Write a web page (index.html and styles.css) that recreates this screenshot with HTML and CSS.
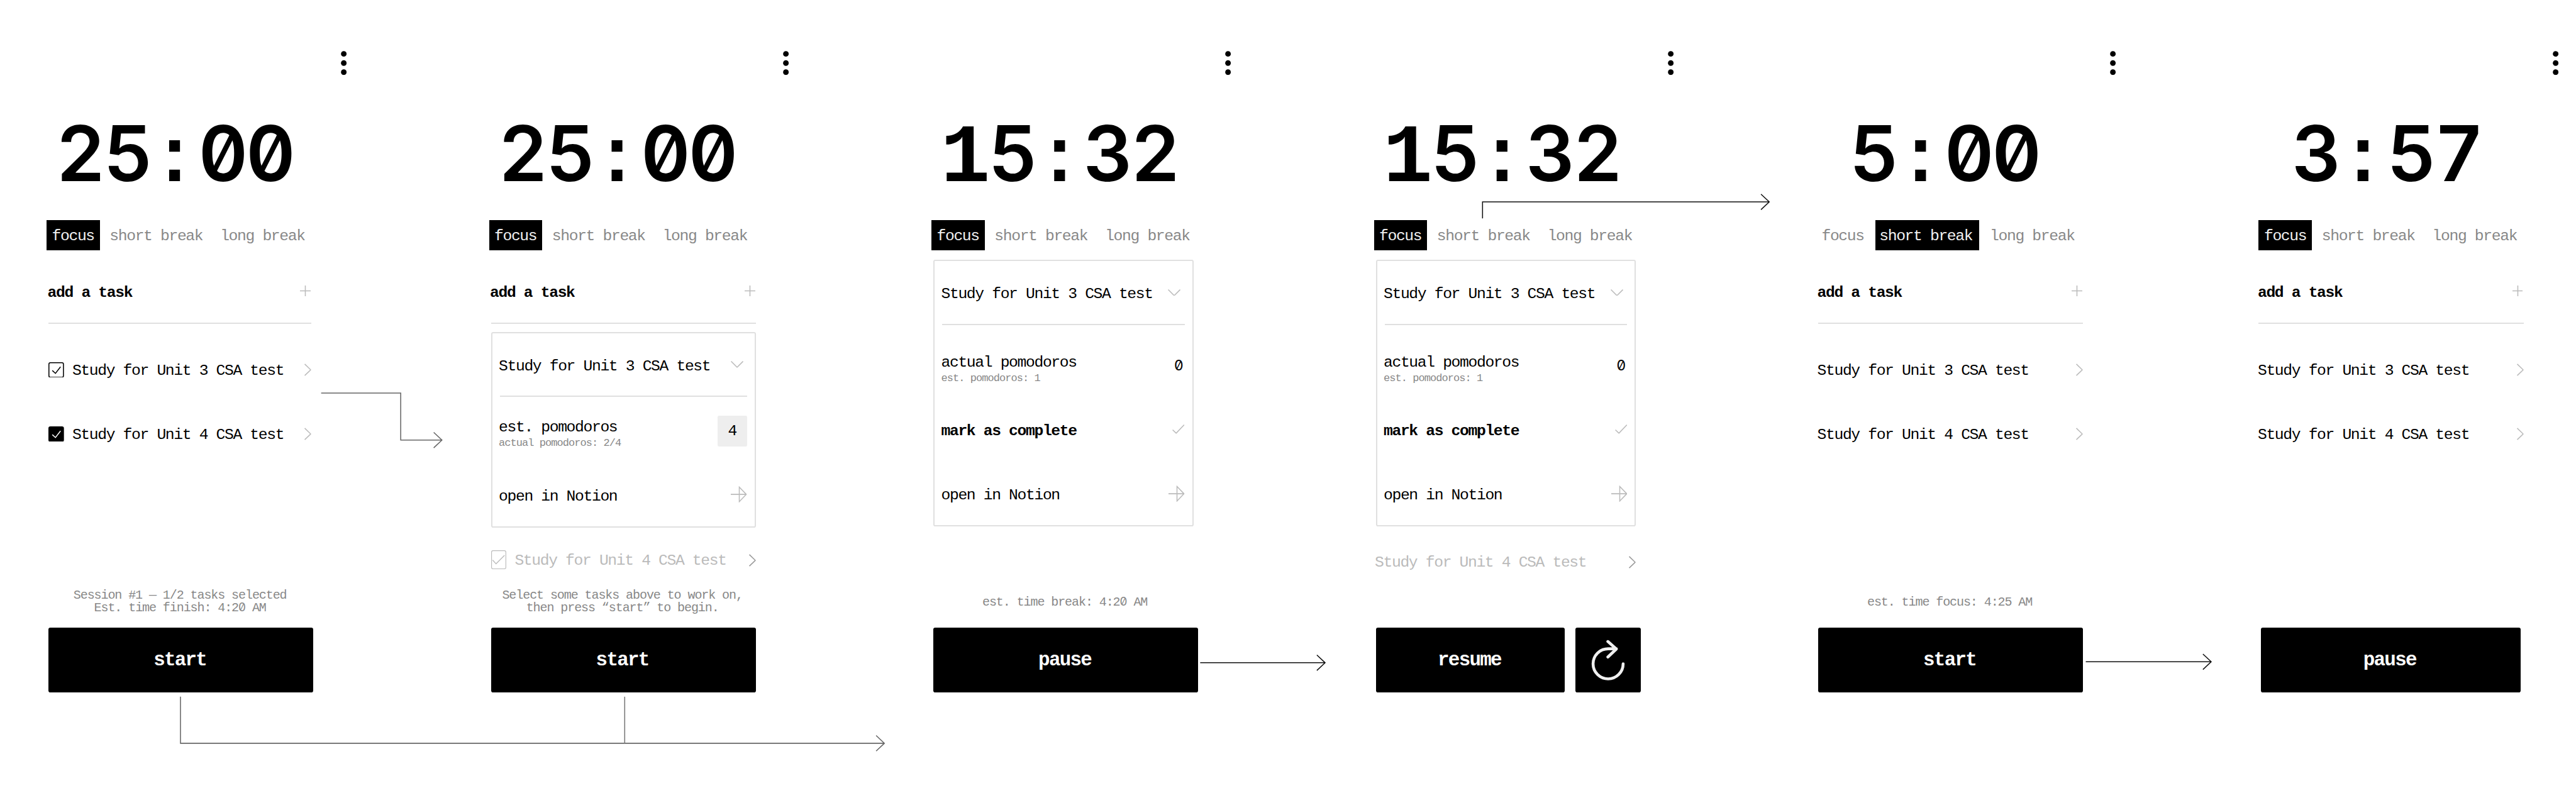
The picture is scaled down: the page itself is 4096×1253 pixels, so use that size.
FILE: index.html
```html
<!DOCTYPE html>
<html lang="en">
<head>
<meta charset="utf-8">
<title>Pomodoro timer flow</title>
<link rel="stylesheet" href="styles.css">
</head>
<body>
<svg class="defs" width="0" height="0" aria-hidden="true">
  <symbol id="dots" viewBox="0 0 12 50"><circle cx="6" cy="6" r="5.8"/><circle cx="6" cy="25" r="5.8"/><circle cx="6" cy="43.8" r="5.8"/></symbol>
  <symbol id="plus" viewBox="0 0 22 22"><path d="M11 0V22M0 11H22"/></symbol>
  <symbol id="right" viewBox="0 0 14 26"><path d="M.7 1.2L13 13L.7 24.8"/></symbol>
  <symbol id="down" viewBox="0 0 26 14"><path d="M.7 .7L13 13L25.300 .7"/></symbol>
  <symbol id="open" viewBox="0 0 33 34"><path d="M0 17H32M17.500 2V32L32 17Z"/></symbol>
  <symbol id="tick" viewBox="0 0 25 19"><path d="M.7 11L8 18L24.500 .7"/></symbol>
</svg>
<main class="board">

  <section class="screen">
    <div class="menu"><svg><use href="#dots"/></svg></div>
    <h1 class="time">25<span class="mono">:</span>00</h1>
    <nav class="tabs"><span class="tab focus on">focus</span><span class="tab short">short break</span><span class="tab long">long break</span></nav>
    <div class="body narrow">
      <div class="add"><b>add a task</b><svg class="plus"><use href="#plus"/></svg></div>
      <div class="tasks">
        <div class="task"><svg class="box" viewBox="0 0 32 32"><rect x="1" y="1" width="30" height="30" rx="3" fill="#fff" stroke="#000" stroke-width="2"/><path d="M8 17L14.500 23L25 9.500" stroke="#000" stroke-width="2"/></svg><span>Study for Unit 3 CSA test</span><svg class="right"><use href="#right"/></svg></div>
        <div class="task"><svg class="box" viewBox="0 0 32 32"><rect width="32" height="32" rx="4" fill="#000" stroke="none"/><path d="M8 17L14.500 23L25 9.500" stroke="#fff" stroke-width="2"/></svg><span>Study for Unit 4 CSA test</span><svg class="right"><use href="#right"/></svg></div>
      </div>
      <p class="note">Session #1 — 1/2 tasks selected<br>Est. time finish: 4:2<span class="zero">0</span> AM</p>
    </div>
    <div class="actions"><button>start</button></div>
  </section>

  <section class="screen">
    <div class="menu"><svg><use href="#dots"/></svg></div>
    <h1 class="time">25<span class="mono">:</span>00</h1>
    <nav class="tabs"><span class="tab focus on">focus</span><span class="tab short">short break</span><span class="tab long">long break</span></nav>
    <div class="body">
      <div class="add"><b>add a task</b><svg class="plus"><use href="#plus"/></svg></div>
      <div class="panel setup">
        <div class="head"><span>Study for Unit 3 CSA test</span><svg class="down"><use href="#down"/></svg></div>
        <div class="count"><div class="labels"><span>est. pomodoros</span><small>actual pomodoros: 2/4</small></div><span class="field">4</span></div>
        <div class="link"><span>open in Notion</span><svg class="open"><use href="#open"/></svg></div>
      </div>
      <div class="task faded"><svg class="box tall" viewBox="0 0 31 39"><rect x=".75" y=".75" width="29.500" height="37.500" rx="3" fill="#fff" stroke="#bbb" stroke-width="1.500"/><path d="M3 20L10 28L27.500 10.500" stroke="#bbb" stroke-width="1.800"/></svg><span>Study for Unit 4 CSA test</span><svg class="right"><use href="#right"/></svg></div>
      <p class="note">Select some tasks above to work on,<br>then press “start” to begin.</p>
    </div>
    <div class="actions"><button>start</button></div>
  </section>

  <section class="screen">
    <div class="menu"><svg><use href="#dots"/></svg></div>
    <h1 class="time"><span class="mono one">1</span>5<span class="mono">:</span>32</h1>
    <nav class="tabs"><span class="tab focus on">focus</span><span class="tab short">short break</span><span class="tab long">long break</span></nav>
    <div class="body slim">
      <div class="panel running">
        <div class="head"><span>Study for Unit 3 CSA test</span><svg class="down"><use href="#down"/></svg></div>
        <div class="count"><div class="labels"><span>actual pomodoros</span><small>est. pomodoros: 1</small></div><span class="value"><span class="zero">0</span></span></div>
        <div class="done"><b>mark as complete</b><svg class="tick"><use href="#tick"/></svg></div>
        <div class="link"><span>open in Notion</span><svg class="open"><use href="#open"/></svg></div>
      </div>
      <p class="note single">est. time break: 4:2<span class="zero">0</span> AM</p>
    </div>
    <div class="actions"><button>pause</button></div>
  </section>

  <section class="screen">
    <div class="menu"><svg><use href="#dots"/></svg></div>
    <h1 class="time"><span class="mono one">1</span>5<span class="mono">:</span>32</h1>
    <nav class="tabs"><span class="tab focus on">focus</span><span class="tab short">short break</span><span class="tab long">long break</span></nav>
    <div class="body slim">
      <div class="panel running">
        <div class="head"><span>Study for Unit 3 CSA test</span><svg class="down"><use href="#down"/></svg></div>
        <div class="count"><div class="labels"><span>actual pomodoros</span><small>est. pomodoros: 1</small></div><span class="value"><span class="zero">0</span></span></div>
        <div class="done"><b>mark as complete</b><svg class="tick"><use href="#tick"/></svg></div>
        <div class="link"><span>open in Notion</span><svg class="open"><use href="#open"/></svg></div>
      </div>
      <div class="task faded next"><span>Study for Unit 4 CSA test</span><svg class="right"><use href="#right"/></svg></div>
    </div>
    <div class="actions"><button>resume</button><button class="reset" aria-label="reset"><svg viewBox="0 0 70 84"><path d="M66 50A31 31 0 1 1 35 19H52M34.500 4L52 19.500L34.500 36"/></svg></button></div>
  </section>

  <section class="screen">
    <div class="menu"><svg><use href="#dots"/></svg></div>
    <h1 class="time">5<span class="mono">:</span>00</h1>
    <nav class="tabs"><span class="tab focus">focus</span><span class="tab short on">short break</span><span class="tab long">long break</span></nav>
    <div class="body">
      <div class="add"><b>add a task</b><svg class="plus"><use href="#plus"/></svg></div>
      <div class="tasks">
        <div class="task"><span>Study for Unit 3 CSA test</span><svg class="right"><use href="#right"/></svg></div>
        <div class="task"><span>Study for Unit 4 CSA test</span><svg class="right"><use href="#right"/></svg></div>
      </div>
      <p class="note single">est. time focus: 4:25 AM</p>
    </div>
    <div class="actions"><button>start</button></div>
  </section>

  <section class="screen">
    <div class="menu"><svg><use href="#dots"/></svg></div>
    <h1 class="time">3<span class="mono">:</span>57</h1>
    <nav class="tabs"><span class="tab focus on">focus</span><span class="tab short">short break</span><span class="tab long">long break</span></nav>
    <div class="body early">
      <div class="add"><b>add a task</b><svg class="plus"><use href="#plus"/></svg></div>
      <div class="tasks">
        <div class="task"><span>Study for Unit 3 CSA test</span><svg class="right"><use href="#right"/></svg></div>
        <div class="task"><span>Study for Unit 4 CSA test</span><svg class="right"><use href="#right"/></svg></div>
      </div>
    </div>
    <div class="actions slim"><button>pause</button></div>
  </section>

  <svg class="arrows" viewBox="0 0 5310 1624">
    <g stroke="#666">
      <path d="M662 810H826V907H910M894 891L911 907L894 923"/>
      <path d="M372 1436V1532H1822M1806 1516L1823 1532L1806 1548"/>
      <path d="M1287.700 1436V1532" stroke="#777"/>
    </g>
    <g stroke="#111">
      <path d="M2474 1366H2731M2714.500 1350L2731.500 1366L2714.500 1382"/>
      <path d="M3056 450V416H3647M3630 400L3647 416L3630 432"/>
      <path d="M4299.500 1364H4557M4541 1348L4558 1364L4541 1380"/>
    </g>
  </svg>
</main>
</body>
</html>
```
FILE: styles.css
```css
/* 1rem stands for 100 design units; the board is 5310 x 1624 units. */
html { font-size: 77.137px; }
* { box-sizing: border-box; }
body {
  margin: 0;
  background: #fff;
  color: #000;
  overflow: hidden;
}
.board {
  position: relative;
  display: grid;
  grid-template-columns: repeat(6, 9.12rem);
  width: 4096px;
  height: 1253px;
  overflow: hidden;
  font-family: "Liberation Mono", monospace;
  font-size: .32rem;
  letter-spacing: -.055em;
  white-space: nowrap;
}
.defs { position: absolute; }
svg { display: block; flex: none; fill: none; stroke: #bbb; stroke-width: 2; }

.menu { height: 2.36rem; padding: 1.05rem 0 0 7.02rem; }
.menu svg { width: .12rem; height: .5rem; fill: #000; stroke: none; }

.time {
  width: 7.2rem;
  height: 1.61rem;
  margin: 0 0 .57rem;
  font: 600 1.58rem/1.61rem Inter, sans-serif;
  font-feature-settings: "tnum", "zero";
  letter-spacing: -.045rem;
  text-align: center;
}
.mono {
  display: inline-block;
  width: .982rem;
  font-family: "Liberation Mono", monospace;
  font-weight: 700;
  line-height: 0;
  letter-spacing: 0;
}
.one { font-size: 1.7rem; }

.tabs { display: flex; height: .62rem; padding-left: .96rem; color: #888; }
.tab { padding-top: .05rem; line-height: .57rem; text-indent: -.01rem; }
.focus { width: 1.1rem; padding-left: .12rem; }
.short { width: 2.14rem; margin-left: .12rem; padding-left: .09rem; }
.long { margin-left: .23rem; }
.on { background: #000; color: #f2f2f2; }

.body {
  display: flex;
  flex-direction: column;
  width: 5.46rem;
  height: 7.78rem;
  margin-left: 1rem;
}
.body > * { flex: none; }
.narrow { width: 5.42rem; }
.slim { width: 5.36rem; }
.early { margin-left: .96rem; }

.add, .head, .count, .link, .done, .task {
  display: flex;
  align-items: center;
  justify-content: space-between;
  text-indent: -.02rem;
}
.add {
  height: 1.52rem;
  padding: .246rem .015rem 0 0;
  border-bottom: .026rem solid #e0e0e0;
}
.plus { width: .22rem; height: .22rem; margin-bottom: .06rem; }

.tasks { margin-top: .3rem; }
.task { height: 1.32rem; }
.right { width: .14rem; height: .26rem; margin-left: auto; margin-bottom: .04rem; }
.box { width: .32rem; height: .32rem; margin: 0 .19rem .03rem 0; }
.faded { height: 1.36rem; margin-bottom: -.3rem; color: #bbb; }
.faded .right { margin-bottom: 0; stroke: #999; }
.tall { width: .31rem; height: .39rem; margin-right: .2rem; }
.next { height: 1.49rem; }

.panel { padding: 0 .155rem; border: .026rem solid #e0e0e0; border-radius: .04rem; }
.setup { height: 4.035rem; margin-top: .16rem; }
.running { height: 5.49rem; margin-top: .2rem; }
.head {
  height: 1.32rem;
  padding: .054rem .08rem 0 0;
  border-bottom: .026rem solid #e0e0e0;
}
.down { width: .26rem; height: .14rem; margin-bottom: .06rem; }
.count { height: 1.4rem; }
.running .count { margin-top: .14rem; }
.labels { display: flex; flex-direction: column; padding-top: .18rem; line-height: .34rem; }
.labels small { font-size: .22rem; letter-spacing: -.055em; color: #888; }
.field {
  width: .61rem;
  height: .64rem;
  border-radius: .03rem;
  background: #eee;
  text-align: center;
  text-indent: 0;
  line-height: .64rem;
}
.value { padding-right: .04rem; text-indent: 0; }
.done { height: 1.28rem; }
.tick { width: .25rem; height: .19rem; margin-bottom: .08rem; }
.link { height: 1.275rem; }
.running .link { height: 1.31rem; padding-top: .044rem; }
.open { width: .33rem; height: .34rem; margin-bottom: .06rem; }
.zero {
  display: inline-block;
  width: .58em;
  font-family: Inter, sans-serif;
  font-size: .94em;
  font-feature-settings: "zero";
  letter-spacing: 0;
  line-height: 0;
  text-align: center;
}

.note {
  width: 5.42rem;
  margin: auto 0 .265rem;
  color: #888;
  font-size: .26rem;
  letter-spacing: -.055em;
  line-height: .265rem;
  text-align: center;
}
.single { margin-bottom: .39rem; }

.actions { display: flex; gap: .22rem; width: 5.46rem; margin-left: 1rem; }
.actions.slim { width: 5.36rem; }
button {
  flex: 1;
  height: 1.34rem;
  padding: .02rem .04rem 0 0;
  border: 0;
  border-radius: .04rem;
  background: #000;
  color: #fff;
  font: 700 .4rem/1.3rem "Liberation Mono", monospace;
  letter-spacing: -.055em;
}
.reset { display: grid; flex: none; place-items: center; width: 1.34rem; padding: 0; }
.reset svg {
  width: .7rem;
  height: .84rem;
  stroke: #f0f0f0;
  stroke-width: 6;
  stroke-linecap: round;
  stroke-linejoin: round;
}

/* Flow arrows run across the gaps between the screens. */
.arrows { position: absolute; inset: 0; width: 100%; height: 100%; }
```
